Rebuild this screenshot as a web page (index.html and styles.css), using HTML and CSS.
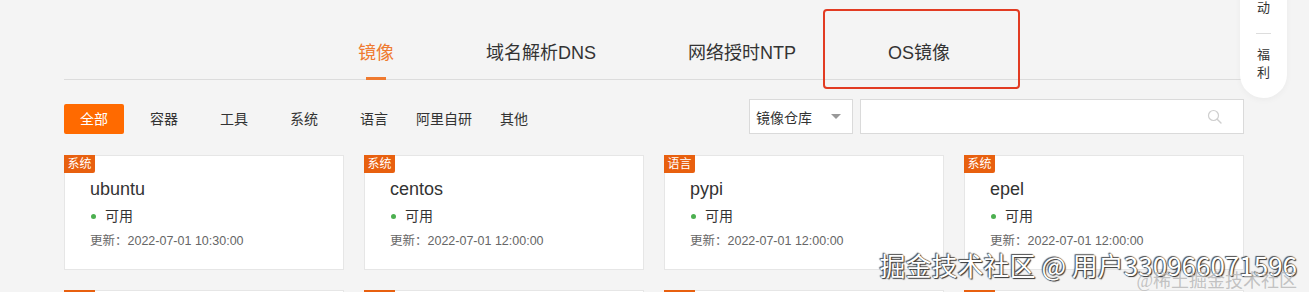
FILE: index.html
```html
<!DOCTYPE html>
<html lang="zh-CN">
<head>
    <meta charset="UTF-8">
    <meta name="viewport" content="width=device-width, initial-scale=1.0">
    <title>镜像站</title>
    <link rel="stylesheet" href="styles.css">
</head>
<body>
    <!-- 顶部标签 -->
    <div class="page">
        <div class="tabs">
            <div class="tab active">镜像</div>
            <div class="tab">域名解析DNS</div>
            <div class="tab">网络授时NTP</div>
            <div class="tab">OS镜像</div>
        </div>

        <!-- 分类 + 搜索 -->
        <div class="toolbar">
            <div class="filters">
                <div class="filter active">全部</div>
                <div class="filter">容器</div>
                <div class="filter">工具</div>
                <div class="filter">系统</div>
                <div class="filter">语言</div>
                <div class="filter">阿里自研</div>
                <div class="filter">其他</div>
            </div>
            <div class="search">
                <div class="select">
                    <span>镜像仓库</span>
                    <span class="caret"></span>
                </div>
                <div class="input">
                    <svg width="16" height="16" viewBox="0 0 16 16">
                        <circle cx="6.5" cy="6.5" r="5" fill="none" stroke="#cfcfcf" stroke-width="1.2"/>
                        <line x1="10.2" y1="10.2" x2="14" y2="14" stroke="#cfcfcf" stroke-width="1.4" stroke-linecap="round"/>
                    </svg>
                </div>
            </div>
        </div>

        <!-- 镜像列表 -->
        <div class="cards">
            <div class="card">
                <span class="badge">系统</span>
                <div class="name">ubuntu</div>
                <div class="status"><i class="dot"></i>可用</div>
                <div class="time">更新：2022-07-01 10:30:00</div>
            </div>
            <div class="card">
                <span class="badge">系统</span>
                <div class="name">centos</div>
                <div class="status"><i class="dot"></i>可用</div>
                <div class="time">更新：2022-07-01 12:00:00</div>
            </div>
            <div class="card">
                <span class="badge">语言</span>
                <div class="name">pypi</div>
                <div class="status"><i class="dot"></i>可用</div>
                <div class="time">更新：2022-07-01 12:00:00</div>
            </div>
            <div class="card">
                <span class="badge">系统</span>
                <div class="name">epel</div>
                <div class="status"><i class="dot"></i>可用</div>
                <div class="time">更新：2022-07-01 12:00:00</div>
            </div>
            <div class="card"><span class="badge">系统</span></div>
            <div class="card"><span class="badge">系统</span></div>
            <div class="card"><span class="badge">系统</span></div>
            <div class="card"><span class="badge">系统</span></div>
        </div>
    </div>

    <!-- 右侧浮动 -->
    <div class="float-bar">
        <div class="float-text">活<br>动</div>
        <div class="float-line"></div>
        <div class="float-text">福<br>利</div>
    </div>

    <!-- 标注框 -->
    <div class="mark"></div>

    <!-- 水印 -->
    <div class="watermark">
        <div class="wm-main">掘金技术社区 @ 用户330966071596</div>
        <div class="wm-sub">@稀土掘金技术社区</div>
    </div>
</body>
</html>
```

FILE: styles.css
```css
/* 全体 */
body {
    margin: 0;
    padding: 0;
    background-color: #f4f4f4;
    font-family: "Liberation Sans", "Noto Sans CJK SC", sans-serif;
    color: #333;
    height: 292px;
    overflow: hidden;
    position: relative;
}
.page {
    width: 1180px;
    margin-left: 64px;
}
/* 标签 */
.tabs {
    display: flex;
    justify-content: center;
    gap: 92px;
    border-bottom: 1px solid #dcdcdc;
    height: 79px;
}
.tab {
    position: relative;
    font-size: 18px;
    line-height: 26px;
    padding-top: 40px;
}
.tab.active {
    color: #ef7a2f;
}
.tab.active::after {
    content: "";
    position: absolute;
    left: 50%;
    bottom: -1px;
    width: 20px;
    height: 3px;
    margin-left: -10px;
    background-color: #ef7a2f;
}
/* 工具栏 */
.toolbar {
    display: flex;
    justify-content: space-between;
    align-items: flex-end;
    margin-top: 17px;
    height: 37px;
}
.filters {
    display: flex;
    gap: 10px;
}
.filter {
    width: 60px;
    height: 30px;
    line-height: 30px;
    text-align: center;
    font-size: 14px;
    border-radius: 2px;
}
.filter.active {
    background-color: #ff6a00;
    color: #fff;
}
.search {
    display: flex;
    gap: 7px;
}
.select {
    width: 104px;
    height: 35px;
    box-sizing: border-box;
    border: 1px solid #dadada;
    background-color: #fff;
    display: flex;
    align-items: center;
    justify-content: space-between;
    padding: 0 11px 0 6px;
    font-size: 14px;
}
.caret {
    width: 0;
    height: 0;
    border-left: 5px solid transparent;
    border-right: 5px solid transparent;
    border-top: 5px solid #999;
}
.input {
    width: 384px;
    height: 35px;
    box-sizing: border-box;
    border: 1px solid #dadada;
    background-color: #fff;
    display: flex;
    align-items: center;
    justify-content: flex-end;
    padding-right: 20px;
}
/* 卡片 */
.cards {
    display: grid;
    grid-template-columns: repeat(4, 1fr);
    gap: 20px;
    margin-top: 21px;
}
.card {
    position: relative;
    height: 115px;
    box-sizing: border-box;
    background-color: #fff;
    border: 1px solid #e6e6e6;
    padding: 21px 25px 0;
}
.badge {
    position: absolute;
    top: -1px;
    left: -1px;
    width: 31px;
    height: 18px;
    line-height: 18px;
    text-align: center;
    font-size: 12px;
    color: #fff;
    background-color: #e8600f;
    border-radius: 0 0 2px 0;
}
.name {
    font-size: 18px;
    line-height: 24px;
}
.status {
    margin-top: 5px;
    font-size: 14px;
    line-height: 20px;
    display: flex;
    align-items: center;
}
.dot {
    width: 5px;
    height: 5px;
    border-radius: 50%;
    background-color: #4caf50;
    margin: 0 9px 0 1px;
}
.time {
    margin-top: 6px;
    font-size: 12.5px;
    line-height: 18px;
    color: #666;
}
/* 右侧浮动 */
.float-bar {
    position: absolute;
    top: -19px;
    left: 1240px;
    width: 47px;
    padding-bottom: 16px;
    background-color: #fff;
    border-radius: 0 0 24px 24px;
    box-shadow: 0 2px 6px rgba(0, 0, 0, 0.04);
    text-align: center;
}
.float-text {
    font-size: 13px;
    line-height: 18px;
}
.float-line {
    width: 15px;
    height: 1px;
    background-color: #ddd;
    margin: 16px auto 12px;
}
/* 标注 */
.mark {
    position: absolute;
    left: 823px;
    top: 9px;
    width: 193px;
    height: 76px;
    border: 2px solid #e23b22;
    border-radius: 4px;
}
/* 水印 */
.watermark {
    position: absolute;
    right: 12px;
    top: 250px;
    text-align: right;
}
.wm-main {
    font-family: "Noto Sans CJK SC", sans-serif;
    font-size: 26px;
    line-height: 30px;
    color: #fff;
    white-space: nowrap;
    text-shadow: 0 0 1px #333, 1px 1px 1px #333, -1px -1px 1px #555;
}
.wm-sub {
    position: absolute;
    right: 0;
    top: 20px;
    white-space: nowrap;
    font-family: "Liberation Serif", "Noto Sans CJK SC", serif;
    font-size: 18px;
    line-height: 22px;
    color: rgba(180, 180, 180, 0.8);
}
```
